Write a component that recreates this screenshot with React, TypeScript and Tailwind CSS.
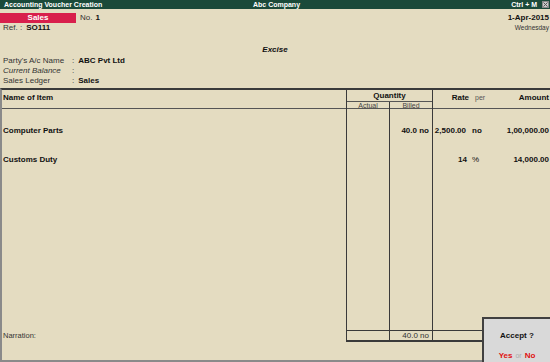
import React from "react";

const line = "border-[#3a3a3a]";

export default function App() {
  return (
    <div className="w-[550px] h-[362px] bg-[#e4dcc1] relative overflow-hidden font-['Liberation_Sans',Arial,sans-serif] text-[8px] leading-none text-[#111]">
      {/* Title bar */}
      <div className="h-[9px] bg-[#1b4a3a] flex items-center text-white font-bold text-[7px] pl-[4px] pr-[1px]">
        <div className="flex-1">Accounting Voucher Creation</div>
        <div className="w-[60px] text-center">Abc Company</div>
        <div className="flex-1 flex justify-end items-center">
          <span className="mr-[5px]">Ctrl + M</span>
          <span className="w-[7px] h-[7px] bg-[#c8c8c8] border border-[#888] flex items-center justify-center">
            <svg width="5" height="5" viewBox="0 0 5 5">
              <path d="M0.5 0.5 L4.5 4.5 M4.5 0.5 L0.5 4.5" stroke="#555" strokeWidth="1" />
            </svg>
          </span>
        </div>
      </div>

      {/* Voucher header */}
      <div className="flex justify-between pt-[4px]">
        <div className="flex flex-col">
          <div className="flex items-center h-[10px]">
            <div className="w-[76px] h-[10px] bg-[#d81f4c] text-white font-bold flex items-center justify-center text-[8px]">Sales</div>
            <span className="ml-[4px] text-[#333]">No.</span>
            <span className="ml-[3px] font-bold">1</span>
          </div>
          <div className="flex items-center h-[10px] pl-[3px]">
            <span className="text-[#333]">Ref. :</span>
            <span className="ml-[4px] font-bold">SO111</span>
          </div>
        </div>
        <div className="flex flex-col items-end pr-[1px]">
          <div className="h-[10px] flex items-center font-bold">1-Apr-2015</div>
          <div className="h-[10px] flex items-center text-[6.5px] text-[#333]">Wednesday</div>
        </div>
      </div>

      <div className="mt-[12px] h-[10px] flex items-center justify-center font-bold italic">Excise</div>

      <div className="mt-[1px] flex flex-col pl-[3px]">
        <div className="h-[10px] flex items-center">
          <span className="w-[69px] text-[#333]">Party's A/c Name</span>
          <span className="text-[#333]">:</span>
          <span className="ml-[4px] font-bold">ABC Pvt Ltd</span>
        </div>
        <div className="h-[10px] flex items-center">
          <span className="w-[69px] italic text-[#333]">Current Balance</span>
          <span className="text-[#333]">:</span>
        </div>
        <div className="h-[10px] flex items-center">
          <span className="w-[69px] text-[#333]">Sales Ledger</span>
          <span className="text-[#333]">:</span>
          <span className="ml-[4px] font-bold">Sales</span>
        </div>
      </div>

      {/* Table */}
      <div className={`mt-[2px] h-[254px] border-t-2 ${line} flex border-l-2 border-l-[#8a8a8a]`}>
        {/* Name of item */}
        <div className="w-[344px] flex flex-col">
          <div className="h-[19px] border-b border-[#555] font-bold pl-[1px] pt-[4px]">Name of Item</div>
          <div className="flex-1 flex flex-col gap-[19px] pt-[17px] pl-[1px] font-bold">
            <div className="h-[10px] flex items-center">Computer Parts</div>
            <div className="h-[10px] flex items-center">Customs Duty</div>
          </div>
          <div className="h-[12px] flex items-center pl-[1px] text-[7.5px] text-[#333]">Narration:</div>
        </div>

        {/* Quantity */}
        <div className={`w-[86px] border-l ${line} flex flex-col`}>
          <div className="h-[12px] border-b border-[#555] font-bold flex items-center justify-center">Quantity</div>
          <div className="flex-1 flex">
            <div className="w-[42px] flex flex-col">
              <div className="h-[7px] border-b border-[#555] flex items-center justify-center text-[7px] text-[#444]">Actual</div>
              <div className="flex-1" />
              <div className={`h-[12px] border-t border-b-2 ${line}`} />
            </div>
            <div className={`w-[43px] border-l ${line} flex flex-col`}>
              <div className="h-[7px] border-b border-[#555] flex items-center justify-center text-[7px] text-[#444]">Billed</div>
              <div className="flex-1 flex flex-col gap-[19px] pt-[17px] pr-[3px] font-bold">
                <div className="h-[10px] flex items-center justify-end">40.0 no</div>
                <div className="h-[10px]" />
              </div>
              <div className={`h-[12px] border-t border-b-2 ${line} flex items-center justify-end pr-[3px] text-[#333]`}>40.0 no</div>
            </div>
          </div>
        </div>

        {/* Rate / Amount */}
        <div className={`flex-1 border-l ${line} flex flex-col`}>
          <div className="h-[19px] border-b border-[#555] flex pt-[4px] font-bold">
            <div className="w-[36px] text-right">Rate</div>
            <div className="ml-[6px] font-normal text-[7px] text-[#555]">per</div>
            <div className="flex-1 text-right pr-[1px]">Amount</div>
          </div>
          <div className="flex-1 flex flex-col gap-[19px] pt-[17px] font-bold">
            <div className="h-[10px] flex items-center">
              <div className="w-[33px] text-right">2,500.00</div>
              <div className="ml-[6px] w-[16px]">no</div>
              <div className="flex-1 text-right pr-[1px]">1,00,000.00</div>
            </div>
            <div className="h-[10px] flex items-center">
              <div className="w-[34px] text-right">14</div>
              <div className="ml-[5px] w-[16px] font-normal">%</div>
              <div className="flex-1 text-right pr-[1px]">14,000.00</div>
            </div>
          </div>
          <div className={`h-[12px] border-t border-b-2 ${line}`} />
        </div>
      </div>

      {/* bottom strip */}
      <div className="h-[20px] border-l-2 border-b-2 border-[#8a8a8a]" />

      {/* Accept box */}
      <div className="absolute right-0 bottom-0 w-[68px] h-[45px] bg-[#d9d9d9] border-l-2 border-t-2 border-[#404040] flex flex-col items-center">
        <div className="mt-[13px] font-bold text-[8px]">Accept ?</div>
        <div className="mt-[12px] text-[8px]">
          <span className="font-bold text-[#e01010]">Yes</span>
          <span className="mx-[3px] text-[#aaa] text-[7px]">or</span>
          <span className="font-bold text-[#e01010]">No</span>
        </div>
      </div>
    </div>
  );
}
